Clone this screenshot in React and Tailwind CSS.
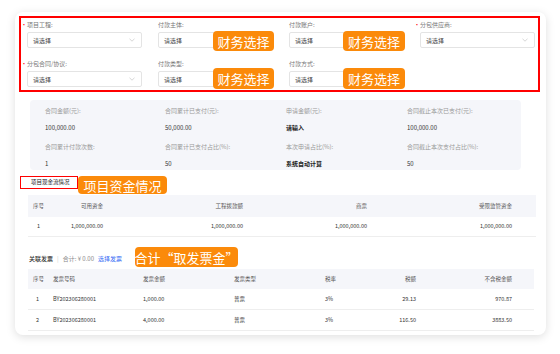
import React from "react";

const font = "font-['Noto_Sans_CJK_SC','Noto_Sans',sans-serif]";

function Badge({ children, className }) {
  return (
    <span
      className={`absolute z-10 flex items-center justify-center whitespace-nowrap rounded-[4px] bg-[#fb8a0a] text-[13px] leading-none text-white ${className}`}
    >
      {children}
    </span>
  );
}

function Chevron() {
  return (
    <svg width="6" height="4" viewBox="0 0 6 4" className="text-[#bbb]">
      <path d="M0.5 0.8 L3 3.2 L5.5 0.8" fill="none" stroke="currentColor" strokeWidth="0.6" />
    </svg>
  );
}

function Field({ label, required, badge }) {
  return (
    <div className="relative w-[131px] shrink-0">
      <div className="flex h-[8px] items-center text-[6px] text-[#777]">
        {required && <span className="-ml-[6px] w-[6px] text-[#f00]">•</span>}
        <span>{label}</span>
      </div>
      <div className="mt-[4px] flex h-[16px] w-[115px] items-center justify-between rounded-[2px] border border-[#e4e4e4] bg-white pl-[5px] pr-[6px] text-[6px] text-[#444]">
        <span>请选择</span>
        <Chevron />
      </div>
      {badge && <Badge className={badge}>财务选择</Badge>}
    </div>
  );
}

function Info({ label, value, strong }) {
  return (
    <div className="flex flex-col">
      <div className="flex h-[10px] items-center text-[6px] text-[#999]">{label}</div>
      <div
        className={`mt-[7px] flex h-[10px] items-center text-[6px] ${strong ? "font-bold text-[#222]" : "text-[#333]"}`}
      >
        {value}
      </div>
    </div>
  );
}

const cashHead = ["序号", "可用资金", "工程拨款额", "商票", "受限监管资金"];
const cashRow = ["1", "1,000,000.00", "1,000,000.00", "1,000,000.00", "1,000,000.00"];

const invoices = [
  ["1", "BY202306280001", "1,000.00", "普票", "3%", "29.13", "970.87"],
  ["2", "BY202306280001", "4,000.00", "普票", "3%", "116.50", "3883.50"],
];

const cashCols = "grid grid-cols-[19px_56px_140px_124px_145px_1fr]";
const invCols = "grid grid-cols-[19px_96px_91px_91px_43px_48px_96px_1fr]";

export default function App() {
  return (
    <div className={`h-[354px] w-[560px] overflow-hidden bg-white pl-[15px] pt-[12px] ${font}`}>
      <div className="flex h-[323px] w-[531px] flex-col rounded-[8px] bg-white px-[4px] pt-[4px] shadow-[0_2px_10px_rgba(0,0,0,0.13)]">
        {/* form */}
        <div className="flex h-[76px] w-[521px] flex-col gap-[11px] border-2 border-[#f00] pl-[6px] pt-[2px]">
          <div className="flex">
            <Field label="项目工程:" required />
            <Field label="付款主体:" badge="left-[55px] top-[11px] h-[20px] w-[61px]" />
            <Field label="付款账户:" badge="left-[54px] top-[11px] h-[20px] w-[62px]" />
            <Field label="分包供应商:" required />
          </div>
          <div className="flex">
            <Field label="分包合同/协议:" required />
            <Field label="付款类型:" badge="left-[55px] top-[9px] h-[21px] w-[61px]" />
            <Field label="付款方式:" badge="left-[54px] top-[9px] h-[21px] w-[62px]" />
          </div>
        </div>

        {/* contract info */}
        <div className="ml-[11px] mt-[8px] grid h-[70px] w-[491px] grid-cols-[120px_121px_121px_1fr] gap-y-[7px] rounded-[4px] bg-[#f5f6fa] pl-[15px] pt-[5px]">
          <Info label="合同金额(元):" value="100,000.00" />
          <Info label="合同累计已支付(元):" value="50,000.00" />
          <Info label="申请金额(元):" value="请输入" strong />
          <Info label="合同截止本次已支付(元):" value="100,000.00" />
          <Info label="合同累计付款次数:" value="1" />
          <Info label="合同累计已支付占比(%):" value="50" />
          <Info label="本次申请占比(%):" value="系统自动计算" strong />
          <Info label="合同截止本次支付占比(%):" value="50" />
        </div>

        {/* cash flow title */}
        <div className="relative mt-[6px] flex">
          <div className="ml-[1px] flex h-[13px] w-[58px] items-center border-[1.5px] border-[#f00] pl-[10px] text-[5.5px] text-[#222]">
            项目现金流情况
          </div>
          <Badge className="left-[59px] top-0 h-[18px] w-[89px]">项目资金情况</Badge>
        </div>

        {/* cash flow table */}
        <div className="ml-[9px] mt-[6px] w-[508px] text-[5.5px]">
          <div className={`${cashCols} h-[22px] items-center bg-[#f5f6fa] text-[#555]`}>
            {cashHead.map((h, i) => (
              <div key={h} className={i === 0 ? "pl-[5px]" : "text-right"}>
                {h}
              </div>
            ))}
          </div>
          <div className={`${cashCols} h-[20px] items-center border-b border-[#eee] text-[#333]`}>
            {cashRow.map((c, i) => (
              <div key={i} className={i === 0 ? "pl-[9px]" : "text-right"}>
                {c}
              </div>
            ))}
          </div>
        </div>

        {/* invoice line */}
        <div className="relative ml-[10px] mt-[16px] flex h-[10px] items-center text-[6px]">
          <span className="font-medium text-[#333]">关联发票</span>
          <span className="mx-[4px] text-[#ccc]">|</span>
          <span className="text-[#888]">合计: ¥ 0.00</span>
          <span className="ml-[4px] text-[#3b6ef5]">选择发票</span>
          <Badge className="left-[106px] -top-[6px] h-[20px] w-[103px]">合计“取发票金”</Badge>
        </div>

        {/* invoice table */}
        <div className="ml-[9px] mt-[6px] w-[506px] text-[5.5px]">
          <div className={`${invCols} h-[20px] items-center bg-[#f5f6fa] text-[#555]`}>
            <div className="pl-[5px]">序号</div>
            <div className="pl-[6px]">发票号码</div>
            <div>发票金额</div>
            <div>发票类型</div>
            <div>税率</div>
            <div className="text-right">税额</div>
            <div className="text-right">不含税金额</div>
          </div>
          {invoices.map((r) => (
            <div key={r[0]} className={`${invCols} h-[21px] items-center border-b border-[#eee] text-[#333]`}>
              <div className="pl-[8px]">{r[0]}</div>
              <div className="pl-[6px]">{r[1]}</div>
              <div>{r[2]}</div>
              <div>{r[3]}</div>
              <div>{r[4]}</div>
              <div className="text-right">{r[5]}</div>
              <div className="text-right">{r[6]}</div>
            </div>
          ))}
        </div>
      </div>
    </div>
  );
}
